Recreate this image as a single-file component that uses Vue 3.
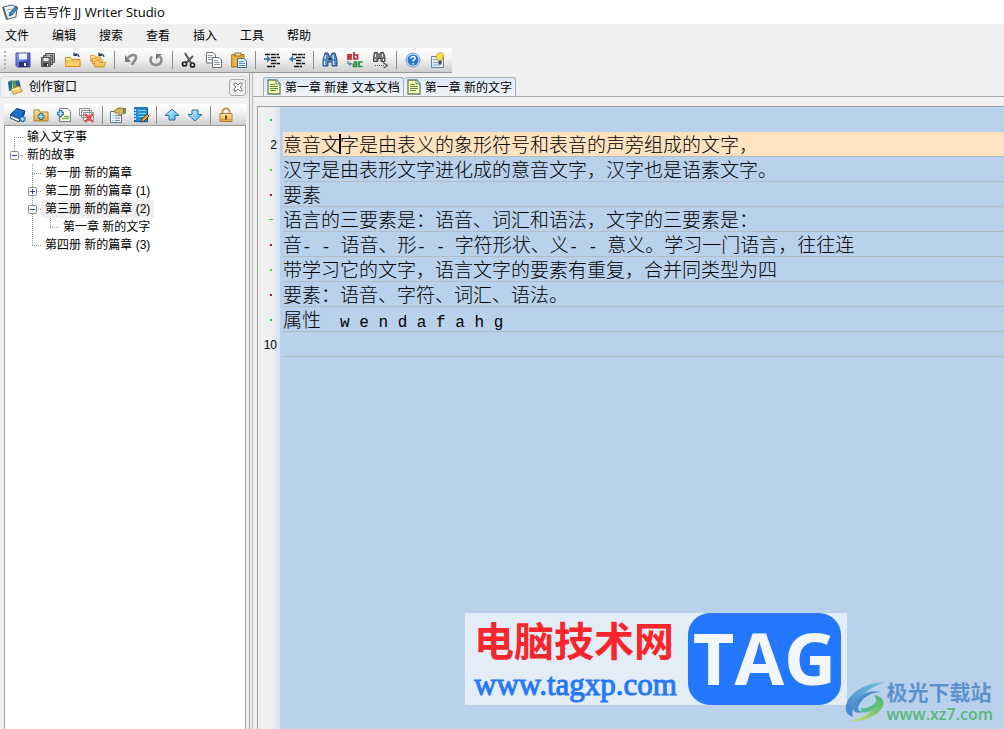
<script setup>
const menus = ['文件', '编辑', '搜索', '查看', '插入', '工具', '帮助']

const mainTools = [
  [['save', '保存'], ['saveall', '全部保存'], ['open', '打开'], ['openall', '全部打开']],
  [['undo', '撤销'], ['redo', '重做']],
  [['cut', '剪切'], ['copy', '复制'], ['paste', '粘贴']],
  [['indent', '增加缩进'], ['outdent', '减少缩进']],
  [['find', '查找'], ['replace', '替换'], ['findnext', '查找下一个']],
  [['help', '帮助'], ['tip', '提示']],
]

const sideTools = [
  [['book', '新建故事'], ['folder', '新建分册'], ['page', '新建章节'], ['remove', '删除']],
  [['props', '属性'], ['notes', '笔记']],
  [['up', '上移'], ['down', '下移']],
  [['lock', '锁定']],
]

// Connector cells: t = first, l = last, m = middle, v = pass-through, b = blank; box = expander sign
const tree = [
  { cells: ['t'], text: '输入文字事' },
  { cells: ['l'], text: '新的故事', box: '-' },
  { cells: ['b', 'm'], text: '第一册 新的篇章' },
  { cells: ['b', 'm'], text: '第二册 新的篇章 (1)', box: '+' },
  { cells: ['b', 'm'], text: '第三册 新的篇章 (2)', box: '-', selected: true },
  { cells: ['b', 'v', 'l'], text: '第一章 新的文字' },
  { cells: ['b', 'l'], text: '第四册 新的篇章 (3)' },
]
const paths = {
  t: 'M9.5 9V18M9 9.5H18',
  l: 'M9.5 0V9M9 9.5H18',
  m: 'M9.5 0V18M9 9.5H18',
  v: 'M9.5 0V18',
  b: '',
}

const tabs = ['第一章 新建 文本文档', '第一章 新的文字']

const lines = [
  { mark: 'dot', parts: [] },
  { num: 2, current: true, before: '意音文', parts: ['字是由表义的象形符号和表音的声旁组成的文字，'] },
  { mark: 'dot', parts: ['汉字是由表形文字进化成的意音文字，汉字也是语素文字。'] },
  { mark: 'red', parts: ['要素'] },
  { mark: 'dash', parts: ['语言的三要素是：语音、词汇和语法，文字的三要素是：'] },
  { mark: 'red', parts: ['音', '- - ', '语音、形', '- - ', '字符形状、义', '- - ', '意义。学习一门语言，往往连'] },
  { mark: 'dot', parts: ['带学习它的文字，语言文字的要素有重复，合并同类型为四'] },
  { mark: 'red', parts: ['要素：语音、字符、词汇、语法。'] },
  { mark: 'dot', parts: ['属性　', 'w e n d a f a h g'] },
  { num: 10, parts: [] },
]
</script>

<template>
  <div class="app">
    <svg class="defs" aria-hidden="true">
      <defs>
        <linearGradient id="gBlue" x1="0" y1="0" x2="1" y2="1"><stop offset="0" stop-color="#8fa4f2" /><stop offset="1" stop-color="#2336ae" /></linearGradient>
        <linearGradient id="gGold" x1="0" y1="0" x2="0" y2="1"><stop offset="0" stop-color="#ffe9a3" /><stop offset="1" stop-color="#f0a92c" /></linearGradient>
        <linearGradient id="gSky" x1="0" y1="0" x2="1" y2="1"><stop offset="0" stop-color="#d2f4ff" /><stop offset="1" stop-color="#46aee8" /></linearGradient>
        <linearGradient id="gSwoosh" x1="0" y1="1" x2="1" y2="0"><stop offset="0" stop-color="#3f7fd0" /><stop offset="1" stop-color="#72c5dc" /></linearGradient>
        <linearGradient id="gLeaf" x1="0" y1="1" x2="1" y2="0"><stop offset="0" stop-color="#c8dd62" /><stop offset="1" stop-color="#42b877" /></linearGradient>
      </defs>
      <symbol id="writer" viewBox="0 0 16 16"><path d="M1 3l9-2 5 2-1 10-9 2.500z" fill="#eef3f7" stroke="#56616c" /><path d="M1 3l4 12.500" stroke="#56616c" stroke-width="2" /><path d="M5 6l6-1M6 9l4-1" stroke="#99a9b8" /><path d="M7 12l1-3 6-7 2 2-6 7z" fill="#3e88c0" stroke="#174469" stroke-width=".7" /></symbol>
      <symbol id="save" viewBox="0 0 16 16"><path d="M1 1h14v14H2.500L1 13.500z" fill="url(#gBlue)" stroke="#4352b0" /><path d="M4 1.500h8v6H4z" fill="#edf3ff" /><path d="M4 10h8v5H4z" fill="#25326f" /><path d="M9 11h2v3H9z" fill="#fff" /></symbol>
      <symbol id="saveall" viewBox="0 0 16 16"><g stroke="#555"><path d="M5.500 1.500h9v9h-9z" fill="#aaa" /><path d="M3.500 3.500h9v9h-9z" fill="#999" /><path d="M1.500 5.500h9v9h-9z" fill="#777" /></g><path d="M3.500 6h5v3h-5zM7 3.500h3v1H7z" fill="#e8e8e8" /><path d="M3.500 11h5v3h-5z" fill="#333" /><path d="M7 12h1v2H7z" fill="#fff" /></symbol>
      <symbol id="open" viewBox="0 0 16 16"><path d="M.5 14.500v-9h5l1.500 2h8v7z" fill="url(#gGold)" stroke="#d48c21" /><path d="M.8 14V9h13.900v5" fill="#ffd06a" stroke="#e5a43a" stroke-width=".8" /><path d="M14 5c0-3-3-3.500-5-2M9 .5v3h3" fill="none" stroke="#26394c" stroke-width="1.200" /></symbol>
      <symbol id="openall" viewBox="0 0 16 16"><g stroke="#d48c21" stroke-width=".8" fill="url(#gGold)"><path d="M.5 9V3.500h4l1 1.500h5v5z" /><path d="M2.500 12V6.500h4l1 1.500h5v4z" /><path d="M4.500 15V9h4l1 1.500h6L14 15z" /></g><path d="M14 5c0-3-3-3.500-5-2M9 .5v3h3" fill="none" stroke="#26394c" stroke-width="1.200" /></symbol>
      <symbol id="undo" viewBox="0 0 16 16"><path d="M5 6c3-4 8-4 8-.5 0 3-3 4-4 7.500" fill="none" stroke="#8b8b8b" stroke-width="2.600" /><path d="M2 3v7h6z" fill="#777" /></symbol>
      <symbol id="redo" viewBox="0 0 16 16"><path d="M4 4.500C.5 9 4 13 8 13s7.500-4 4-8.500" fill="none" stroke="#8b8b8b" stroke-width="2.600" /><path d="M8 2h6L8 8z" fill="#777" /></symbol>
      <symbol id="cut" viewBox="0 0 16 16"><path d="M4 1l6 10M12 4l-7 7" stroke="#50565c" stroke-width="2" /><circle cx="3.500" cy="12" r="2" fill="none" stroke="#222" stroke-width="1.700" /><circle cx="11.500" cy="13" r="2" fill="none" stroke="#222" stroke-width="1.700" /></symbol>
      <symbol id="copy" viewBox="0 0 16 16"><g fill="#fff" stroke="#687078"><path d="M.5.5H7l2.500 2.500v8h-9z" /><path d="M6.500 5.500H13l2.500 2.500v7.500h-9z" /></g><path d="M2 3.500h4M2 5.500h4M2 7.500h4M8 8.500h4M8 10.500h6M8 12.500h6" stroke="#8e969d" /></symbol>
      <symbol id="paste" viewBox="0 0 16 16"><path d="M.7 2.500H13V15H.7z" fill="#eeb440" stroke="#a96c0d" /><path d="M4 1h6v3H4z" fill="#f6dda0" stroke="#8b6517" /><path d="M6.500 6.500H13l2.500 2.500v6.500h-9z" fill="#e5f1ff" stroke="#376a9c" /><path d="M8 9.500h5M8 11.500h6M8 13.500h6" stroke="#5b91c4" /></symbol>
      <symbol id="indent" viewBox="0 0 16 16"><path d="M1 2.500h14M7 5.500h9M7 8.500h6M7 11.500h9M3 14.500h8" stroke="#15181b" stroke-width="1.600" stroke-dasharray="5 .7" /><path d="M0 7h5" stroke="#326b9c" stroke-width="1.600" /><path d="M3 3.500v7L7 7z" fill="#3977b0" /></symbol>
      <symbol id="outdent" viewBox="0 0 16 16"><path d="M3 2.500h13M7 5.500h9M7 8.500h6M7 11.500h9M5 14.500h8" stroke="#15181b" stroke-width="1.600" stroke-dasharray="5 .7" /><path d="M2 7h5" stroke="#326b9c" stroke-width="1.600" /><path d="M4 3.500v7L0 7z" fill="#3977b0" /></symbol>
      <symbol id="find" viewBox="0 0 16 16"><path d="M3 1h3l1 3h2l1-3h3l2 7v6h-5v-4H6v4H1V8z" fill="#5289bd" stroke="#234d79" /><path d="M3.500 3L3 7M11 3l.5 4M2.500 9v4M11.500 9v4" stroke="#dbedff" stroke-width="1.300" /><path d="M6.500 6h3v2h-3z" fill="#18334f" /></symbol>
      <symbol id="replace" viewBox="0 0 16 16"><g fill="none" stroke-width="1.700"><path d="M0 2.800h4V7H1V4.800h3M7 0v7h3.500V3H7" stroke="#c3202f" /><path d="M6.500 10H9.500v4.500H6.500v-2.500h3M15.500 10H12v4.500h3.500" stroke="#1f8a33" /></g><path d="M1 9v3h3M2.800 10.300L4.500 12l-1.700 1.700" fill="none" stroke="#405e7f" /></symbol>
      <symbol id="findnext" viewBox="0 0 16 16"><path d="M2.500.5h3l1 2h1l1-2h3l1.500 5v4H9v-3H6v3H1.500v-4z" fill="#777" stroke="#444" /><path d="M3.500 2v3M10.500 2v3M3 7v2M11.500 7v2" stroke="#eee" /><path d="M3 13.500h9" stroke="#555" stroke-dasharray="1 1" /><path d="M11 10.500l4.500 3-4.500 3" fill="none" stroke="#555" stroke-width="1.300" /></symbol>
      <symbol id="help" viewBox="0 0 16 16"><circle cx="8" cy="8" r="7" fill="#cfe2f8" stroke="#6ba0da" /><circle cx="8" cy="8" r="5.500" fill="#2475c5" /><path d="M6 6.500C6 3.500 10.500 4 10 6.500 9.800 8 8 8 8 9.500M8 11v1.500" fill="none" stroke="#fff" stroke-width="1.600" /></symbol>
      <symbol id="tip" viewBox="0 0 16 16"><path d="M1.500 4.500h12v11h-12z" fill="#e1edf9" stroke="#718298" /><path d="M3 7.500h4M3 10.500h9M3 13h7" stroke="#8fa6c0" /><path d="M7 7C3.500 1 14 -2 13.500 4 13 6 12 6 11.500 8.500H8.500z" fill="#ffe24b" stroke="#d39d19" /><path d="M8.500 8.500h3v4h-3z" fill="#4a5058" /></symbol>
      <symbol id="books" viewBox="0 0 16 16"><path d="M1 3l4-2v10l-3 1z" fill="#256a96" /><path d="M5 2l3-1 2 9-4 1z" fill="#5f9b44" /><path d="M8 2l4-1 2 7-4 2z" fill="#315d91" /><path d="M4 10l8-3 3.500 5-9 3.500z" fill="#f3cf62" stroke="#a77e21" stroke-width=".8" /><path d="M5 11l8-2" stroke="#fff5bd" stroke-width="1.500" /></symbol>
      <symbol id="book" viewBox="0 0 16 16"><path d="M0 8l7-6.500 8 2.500-5 8z" fill="#1674d0" stroke="#0c376a" /><path d="M0 8v3l9 4 1-3z" fill="#f7faff" stroke="#22476e" /><path d="M10 12l5-8v3l-5.500 8z" fill="#164b87" /><path d="M12.500 9v6M9.500 12h6" stroke="#1b6da8" stroke-width="3.500" /><path d="M12.500 10v4M10.500 12h4" stroke="#a4e7fc" stroke-width="1.500" /></symbol>
      <symbol id="folder" viewBox="0 0 16 16"><path d="M1 3h5l1 2h8v9H1z" fill="url(#gGold)" stroke="#a6812d" /><path d="M8 6v7M4.500 9.500h7" stroke="#2872a8" stroke-width="3.500" /><path d="M8 7v5M5.500 9.500h5" stroke="#b9eaff" stroke-width="1.300" /></symbol>
      <symbol id="page" viewBox="0 0 16 16"><path d="M3.500 1.500H12l2.500 3v10h-11z" fill="#fcffe8" stroke="#779" /><path d="M8 9.500h5M6 11.500h7" stroke="#7eb35a" stroke-width="1.500" /><path d="M4.500 3v7M1 6.500h7" stroke="#2872a8" stroke-width="3.500" /><path d="M4.500 4v5M2 6.500h5" stroke="#b9eaff" stroke-width="1.300" /></symbol>
      <symbol id="remove" viewBox="0 0 16 16"><path d="M.5 1.500h10v7H.5zM2.500 3.500h10v7h-10zM4.500 5.500h10v8h-10z" fill="#f7f7f9" stroke="#8d929d" /><path d="M6 7l8 8M14 7l-8 8" stroke="#e4493f" stroke-width="2.300" /></symbol>
      <symbol id="props" viewBox="0 0 16 16"><path d="M.5 4.500h11v11H.5z" fill="#f7faff" stroke="#577491" /><path d="M2.500 8.500h1M5 8.500h5M2.500 11h1M5 11h5M2.500 13.500h1M5 13.500h5" stroke="#608dbb" /><path d="M4 4l4-3h4l4 1v4l-4 1-2 2-2-3H5z" fill="#d4b460" stroke="#77612b" stroke-width=".8" /><path d="M13 1h3v5h-3z" fill="#659348" /></symbol>
      <symbol id="notes" viewBox="0 0 16 16"><path d="M1.500.7h13v14h-13z" fill="#238bda" stroke="#0e4f8e" /><path d="M5 3.500h8M5 6.500h8M5 9.500h7" stroke="#8ed3ff" /><path d="M0 3h3M0 6h3M0 9h3M0 12h3" stroke="#e3f2ff" stroke-width="1.500" /><path d="M8 15l1-3 5-5 2 2-5 5z" fill="#f3ae32" stroke="#553e1d" /></symbol>
      <symbol id="up" viewBox="0 0 16 16"><path d="M8 2l7 6.500h-4V13H5V8.500H1z" fill="url(#gSky)" stroke="#286fa6" stroke-linejoin="round" /></symbol>
      <symbol id="down" viewBox="0 0 16 16"><path d="M8 14L1 7.500h4V3h6v4.500h4z" fill="url(#gSky)" stroke="#286fa6" stroke-linejoin="round" /></symbol>
      <symbol id="lock" viewBox="0 0 16 16"><path d="M4.500 7V4.500a3.500 3 0 0 1 7 0V7" fill="none" stroke="#b99655" stroke-width="1.800" /><path d="M2 6.500h12v8H2z" fill="url(#gGold)" stroke="#a9803a" /><path d="M3 12.500h10" stroke="#d29b3e" /><path d="M8 8.500v4" stroke="#664a1d" stroke-width="2" /></symbol>
      <symbol id="doc" viewBox="0 0 14 16"><path d="M1 1h8.500L13 4.500V15H1z" fill="#ffffa6" stroke="#5f7f7b" stroke-width="1.300" /><path d="M9 1v4h4" fill="#e4eee6" stroke="#5f7f7b" /><path d="M3 5.500h5M3 7.500h8M3 9.500h8M3 11.500h6" stroke="#5c865c" /></symbol>
    </svg>

    <header class="title">
      <svg class="icon"><use href="#writer" /></svg>
      <h1>吉吉写作 <span>JJ Writer Studio</span></h1>
    </header>

    <nav class="menu">
      <button v-for="m in menus" :key="m">{{ m }}</button>
    </nav>

    <div class="toolbar" role="toolbar" aria-label="主工具栏">
      <span class="grip"></span>
      <div v-for="(group, i) in mainTools" :key="i" class="group">
        <button v-for="[id, label] in group" :key="id" :aria-label="label">
          <svg class="icon"><use :href="'#' + id" /></svg>
        </button>
      </div>
    </div>

    <div class="work">
      <aside class="side">
        <div class="side-head">
          <svg class="icon"><use href="#books" /></svg>
          <h2>创作窗口</h2>
          <button class="close" aria-label="关闭">
            <svg viewBox="0 0 10 10"><path d="M1 1h2l2 2 2-2h2v2L7 5l2 2v2H7L5 7 3 9H1V7l2-2-2-2z" fill="#fff" stroke="#777" /></svg>
          </button>
        </div>
        <div class="toolbar small" role="toolbar" aria-label="创作工具栏">
          <div v-for="(group, i) in sideTools" :key="i" class="group">
            <button v-for="[id, label] in group" :key="id" :aria-label="label">
              <svg class="icon"><use :href="'#' + id" /></svg>
            </button>
          </div>
        </div>
        <ul class="tree" role="tree">
          <li v-for="(row, i) in tree" :key="i" role="treeitem">
            <svg v-for="(c, j) in row.cells" :key="j" class="cell" viewBox="0 0 18 18">
              <path :d="paths[c]" stroke="#9a9a9a" stroke-dasharray="1 1" />
              <g v-if="row.box && j === row.cells.length - 1">
                <rect x="5.500" y="5.500" width="8" height="8" rx="1" fill="#f5f5f5" stroke="#8d8d8d" />
                <path :d="row.box === '+' ? 'M7 9.500h5M9.500 7v5' : 'M7 9.500h5'" stroke="#34468c" />
              </g>
            </svg>
            <span class="node" :class="{ selected: row.selected }">{{ row.text }}</span>
          </li>
        </ul>
      </aside>

      <main class="main">
        <div class="tabs" role="tablist">
          <button v-for="(t, i) in tabs" :key="t" role="tab" :aria-selected="i === 0">
            <svg><use href="#doc" /></svg><span>{{ t }}</span>
          </button>
        </div>
        <div class="editor">
          <div class="gutter" aria-hidden="true">
            <div v-for="(l, i) in lines" :key="i" class="mark">
              <template v-if="l.num">{{ l.num }}</template>
              <i v-else :class="l.mark"></i>
            </div>
          </div>
          <div class="text" role="textbox" aria-multiline="true" aria-label="正文" contenteditable="true" spellcheck="false">
            <div v-for="(l, i) in lines" :key="i" class="line" :class="{ current: l.current }"><template v-if="l.before">{{ l.before }}<span class="caret"></span></template><span v-for="(p, j) in l.parts" :key="j" :class="{ latin: j % 2 }">{{ p }}</span></div>
          </div>
          <div class="tag-mark">
            <div class="tag-copy">
              <strong>电脑技术网</strong>
              <span>www.tagxp.com</span>
            </div>
            <b>TAG</b>
          </div>
          <div class="site-mark">
            <svg viewBox="0 0 42 42">
              <path d="M40 1C22 1 3 12 1 25c-1 6 2 9 7 11C5 24 16 10 40 1z" fill="url(#gSwoosh)" />
              <path d="M8 26c2-10 14-18 28-15-9 0-18 5-22 13-2 4 0 7 4 7-5 2-11 0-10-5z" fill="#4c8fce" />
              <path d="M29 14c13 2 12 13 1 20-8 5-18 7-26 6 11-2 20-6 24-12 4-5 4-10 1-14z" fill="url(#gLeaf)" />
              <path d="M16 27c5 1 12-2 16-7 0 7-8 13-16 11z" fill="#5bb98c" />
            </svg>
            <div><strong>极光下载站</strong><span>www.xz7.com</span></div>
          </div>
        </div>
      </main>
    </div>
  </div>
</template>

<style>
html, body, #app { height: 100%; }
body { overflow: hidden; }
</style>

<style scoped>
.app {
  display: flex;
  flex-direction: column;
  height: 100%;
  background: #f0f0f0;
  color: #000;
  font: 12px/18px "Liberation Sans", "Noto Sans CJK SC", sans-serif;
}
.defs { position: absolute; width: 0; height: 0; }
button { border: 0; padding: 0; margin: 0; background: none; font: inherit; color: inherit; }
h1, h2 { margin: 0; font: inherit; }
.icon { width: 16px; height: 16px; flex: none; display: block; }

.title { display: flex; align-items: center; gap: 5px; height: 24px; padding-left: 2px; background: #fff; }
.title span { font-family: "Open Sans", sans-serif; font-size: 13px; }
.menu { display: flex; gap: 23px; height: 24px; padding-left: 5px; }

.toolbar {
  display: flex;
  align-items: center;
  align-self: flex-start;
  height: 24px;
  padding-right: 2px;
  background: linear-gradient(#fff, #f2f2f2 45%, #cecece);
  border-bottom: 1px solid #999;
  border-radius: 0 3px 0 0;
}
.grip { width: 2px; height: 18px; margin: 0 4px 0 4px; background: repeating-linear-gradient(#b5b5b5 0 2px, transparent 2px 4px); }
.group { display: flex; align-items: center; }
.group + .group::before { content: ""; width: 1px; height: 18px; margin: 0 3px 0 4px; background: #8c8c8c; }
.group button { display: grid; place-items: center; width: 25px; height: 22px; }

.work { display: flex; flex: 1; min-height: 0; }
.side { display: flex; flex-direction: column; width: 250px; flex: none; padding-top: 3px; box-sizing: border-box; border-right: 1px solid #a0a0a0; }
.side-head { display: flex; align-items: center; gap: 6px; height: 20px; margin: 0 1px 6px 0; padding: 0 1px 0 6px; border: 1px solid #d8d8d8; border-radius: 4px; }
.close { display: grid; place-items: center; width: 17px; height: 17px; margin-left: auto; border: 1px solid #aaa; border-radius: 3px; }
.close svg { width: 10px; height: 10px; }
.small { align-self: stretch; height: 21px; margin: 0 3px 0 4px; padding-left: 2px; border-radius: 0; }
.small .group button { width: 23px; }
.tree { flex: 1; margin: 0 3px 0 4px; padding: 2px 0 0; list-style: none; background: #fff; border: solid #a0a0a0; border-width: 0 1px; }
.tree li { display: flex; height: 18px; }
.cell { width: 18px; height: 18px; flex: none; }
.node { padding: 0 4px; white-space: pre; }
.selected { background: #efefef; }

.main { display: flex; flex-direction: column; flex: 1; min-width: 0; margin-left: 2px; border-left: 1px solid #b5b5b5; }
.tabs { display: flex; align-items: flex-end; height: 23px; padding-left: 10px; border-bottom: 1px solid #aaa; }
.tabs button { display: flex; align-items: center; gap: 4px; height: 19px; padding: 0 3px; border: 1px solid #a8adb5; border-bottom: 0; border-radius: 3px 3px 0 0; background: linear-gradient(#dce8f8, #f2f4f8); white-space: pre; }
.tabs button + button { border-left: 0; }
.tabs svg { width: 14px; height: 16px; }
.tabs span { padding-top: 2px; }

.editor { position: relative; display: flex; flex: 1; min-height: 0; margin: 9px 0 0 4px; border: solid #a0a0a0; border-width: 1px 0 0 1px; background: #b9d1ea; overflow: hidden; }
.gutter { width: 22px; flex: none; background: linear-gradient(90deg, #f0f0f0 60%, #d5e4f4); }
.mark { display: flex; align-items: center; justify-content: flex-end; height: 25px; padding-right: 3px; }
.mark i { width: 2px; height: 2px; margin-right: 5px; background: #2fd23c; }
.mark .red { background: #b0182a; }
.mark .dash { width: 4px; height: 1px; margin-right: 4px; }
.text { flex: 1; padding-left: 3px; outline: 0; font: 300 19px/24px "Noto Sans CJK SC", sans-serif; }
.line { position: relative; height: 24px; border-bottom: 1px solid #b3bcc3; white-space: pre; }
.line:first-child { border-color: transparent; }
.current { background: #ffe3c0; }
.latin { font: 16px/24px "Liberation Mono", monospace; }
.caret { position: absolute; width: 2px; height: 20px; top: 2px; margin-left: -1px; background: #000; }

.tag-mark { position: absolute; right: 157px; bottom: 24px; display: flex; justify-content: space-between; width: 367px; height: 92px; padding: 0 6px 0 9px; background: rgba(255, 255, 255, 0.6); }
.tag-copy { display: flex; flex-direction: column; white-space: nowrap; }
.tag-copy strong { color: #f8252b; font: bold 40px/52px "Noto Sans CJK SC", sans-serif; }
.tag-copy span { color: #2678fa; font: 31px/40px "Liberation Serif", serif; -webkit-text-stroke: 1px #2678fa; }
.tag-mark b { width: 153px; border-radius: 22px; background: #2378ff; color: #f3f6fc; text-align: center; font: 700 72px/88px "Open Sans", sans-serif; }
.site-mark { position: absolute; right: 11px; bottom: 5px; display: flex; align-items: center; white-space: nowrap; }
.site-mark svg { width: 42px; height: 42px; }
.site-mark div { display: flex; flex-direction: column; }
.site-mark strong { color: #5c91ce; font: bold 21px/25px "Noto Sans CJK SC", sans-serif; }
.site-mark span { color: #58b878; font: 600 16px/20px "Open Sans", sans-serif; }
</style>
